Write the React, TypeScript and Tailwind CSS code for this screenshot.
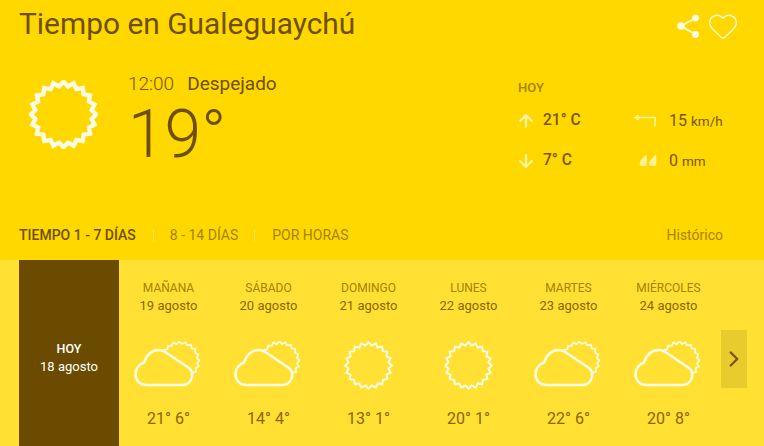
import React from "react";
import { ArrowUp, ArrowDown, ChevronRight, Heart } from "lucide-react";

// jagged ring used by the sun icons, from angle a0 to a1 (degrees, 0 = east, clockwise)
function sunArc(cx: number, cy: number, outer: number, inner: number, teeth: number, a0 = -90, a1 = 270) {
  const pts: string[] = [];
  const step = 180 / teeth;
  const n = Math.round((a1 - a0) / step);
  for (let i = 0; i <= n; i++) {
    const r = i % 2 === 0 ? outer : inner;
    const a = ((a0 + i * step) * Math.PI) / 180;
    pts.push(`${(cx + r * Math.cos(a)).toFixed(2)},${(cy + r * Math.sin(a)).toFixed(2)}`);
  }
  return pts.join(" ");
}

function Sun({ size, stroke = 2 }: { size: number; stroke?: number }) {
  return (
    <svg width={size} height={size} viewBox="0 0 48 48" fill="none">
      <polygon points={sunArc(24, 24, 22.8, 19.8, 20)} stroke="#fffce6" strokeWidth={stroke} />
    </svg>
  );
}

function CloudSun() {
  return (
    <svg width="66" height="48" viewBox="0 0 66 48" fill="none" className="mr-[4px]">
      <polyline points={sunArc(46, 20, 19.5, 17.2, 20, -146, 52)} stroke="#fffce6" strokeWidth="1.7" />
      <path
        d="M13 44 C5 44 1.5 38.5 1.5 33 C1.5 27 6 23 10 21.5 C13 13 19 9 25 9 C28 9 30 10 32 11.5 L55 27 C58 29.5 58.5 33 58 36 C57 41 53 44 48 44 Z"
        stroke="#fffce6"
        strokeWidth="2.6"
        strokeLinejoin="round"
      />
    </svg>
  );
}

function ShareIcon() {
  return (
    <svg width="26" height="26" viewBox="0 0 26 26" fill="none">
      <path d="M20.5 5 L6 13 L20.5 21.5" stroke="#fffce6" strokeWidth="1.8" />
      <circle cx="20.5" cy="5" r="3.4" fill="#fffce6" />
      <circle cx="6" cy="13" r="3.8" fill="#fffce6" />
      <circle cx="20.5" cy="21.5" r="3.4" fill="#fffce6" />
    </svg>
  );
}

function WindIcon() {
  return (
    <svg width="22" height="12" viewBox="0 0 22 12" fill="none">
      <path d="M21 11.5 V2.5 H2" stroke="#fff3a0" strokeWidth="1.5" />
      <path d="M5 0 L1 2.5 L5 5" stroke="#fff3a0" strokeWidth="1.3" />
    </svg>
  );
}

function RainIcon() {
  return (
    <svg width="18" height="13" viewBox="0 0 18 13" fill="#fff09a">
      <path d="M7.5 0.5 C8 4 8 8 7.5 12 H3.5 C1 12 0 10 1 8 C2.5 5 5 2.5 7.5 0.5 Z" />
      <path d="M17 0.5 C17.5 4 17.5 8 17 12 H13 C10.5 12 9.5 10 10.5 8 C12 5 14.5 2.5 17 0.5 Z" />
    </svg>
  );
}

const days = [
  { name: "MAÑANA", date: "19 agosto", icon: "cloud", temp: "21° 6°" },
  { name: "SÁBADO", date: "20 agosto", icon: "cloud", temp: "14° 4°" },
  { name: "DOMINGO", date: "21 agosto", icon: "sun", temp: "13° 1°" },
  { name: "LUNES", date: "22 agosto", icon: "sun", temp: "20° 1°" },
  { name: "MARTES", date: "23 agosto", icon: "cloud", temp: "22° 6°" },
  { name: "MIÉRCOLES", date: "24 agosto", icon: "cloud", temp: "20° 8°" },
];

export default function App() {
  return (
    <div className="w-[764px] h-[446px] overflow-hidden bg-[#ffd800] font-['Roboto',sans-serif] text-[#7a5400]">
      <section className="h-[260px] flex flex-col px-[19px]">
        {/* Title row */}
        <div className="h-[47px] flex items-start justify-between">
          <h1 className="text-[29.9px] leading-[32px] pt-[8px] text-[#6f4e00]">Tiempo en Gualeguaychú</h1>
          <div className="flex items-center gap-[6px] pt-[10px] pr-[6px]">
            <ShareIcon />
            <Heart size={32} strokeWidth={1} className="text-[#fffce6]" />
          </div>
        </div>

        {/* Current conditions */}
        <div className="h-[150px] flex">
          <div className="w-[109px] pt-[33px] pl-[10px]">
            <Sun size={69} stroke={3} />
          </div>
          <div className="w-[390px] pt-[26px]">
            <div className="flex gap-[13px] text-[19px] leading-[22px]">
              <span className="font-light">12:00</span>
              <span className="text-[#6f4e00]">Despejado</span>
            </div>
            <div className="text-[66px] leading-[60px] font-light mt-[10px] text-[#6f4e00]">19°</div>
          </div>
          <div className="pt-[33px]">
            <div className="text-[13px] leading-[16px] font-medium text-[#a88000]">HOY</div>
            <div className="grid grid-cols-[116px_92px] mt-[15px] gap-y-[21px]">
              <div className="flex items-center gap-[7px] h-[19px] ml-[-2px]">
                <ArrowUp size={20} strokeWidth={2.7} className="text-[#fff3a0]" />
                <span className="text-[15.6px] font-medium">21° C</span>
              </div>
              <div className="flex items-center h-[19px]">
                <span className="w-[35px] flex"><WindIcon /></span>
                <span className="text-[16px]">15 <span className="text-[13.5px]">km/h</span></span>
              </div>
              <div className="flex items-center gap-[7px] h-[19px] ml-[-2px]">
                <ArrowDown size={20} strokeWidth={2.7} className="text-[#fff3a0]" />
                <span className="text-[15.6px] font-medium">7° C</span>
              </div>
              <div className="flex items-center h-[19px]">
                <span className="w-[35px] flex pl-[5px]"><RainIcon /></span>
                <span className="text-[16px]">0 <span className="text-[13.5px]">mm</span></span>
              </div>
            </div>
          </div>
        </div>

        {/* Tabs */}
        <div className="flex items-center h-[16px] mt-[30px] text-[14px] leading-[16px] pr-[22px]">
          <span className="font-medium text-[#6f4e00]">TIEMPO 1 - 7 DÍAS</span>
          <span className="w-px h-[11px] bg-[#ffe566] ml-[17px] mr-[16px]" />
          <span className="text-[#a88000]">8 - 14 DÍAS</span>
          <span className="w-px h-[11px] bg-[#ffe566] ml-[16px] mr-[17px]" />
          <span className="text-[#a88000]">POR HORAS</span>
          <span className="ml-auto text-[#a88000]">Histórico</span>
        </div>
      </section>

      {/* 7 day forecast */}
      <section className="h-[186px] bg-[#ffe033] pl-[19px] flex relative">
        <div className="w-[100px] bg-[#6b4b00] text-white flex flex-col items-center pt-[80px] text-[13px] leading-[18px]">
          <span className="font-medium text-[12.5px]">HOY</span>
          <span>18 agosto</span>
        </div>
        {days.map((d) => (
          <div key={d.name} className="w-[100px] flex flex-col items-center pt-[20px] pr-[1px]">
            <span className="text-[12px] leading-[16px] text-[#a88000]">{d.name}</span>
            <span className="text-[13px] leading-[18px] mt-[1px] text-[#8a6600]">{d.date}</span>
            <div className="h-[50px] mt-[25px] flex items-center justify-center">
              {d.icon === "cloud" ? <CloudSun /> : <Sun size={49} stroke={2} />}
            </div>
            <span className="mt-[19px] text-[16px] leading-[20px] text-[#8a6600]">{d.temp}</span>
          </div>
        ))}
        <div className="absolute left-[721px] top-[70px] w-[26px] h-[58px] bg-[#e8cb2c] flex items-center justify-center">
          <ChevronRight size={28} strokeWidth={2.2} className="text-[#7a5400]" />
        </div>
      </section>
    </div>
  );
}
